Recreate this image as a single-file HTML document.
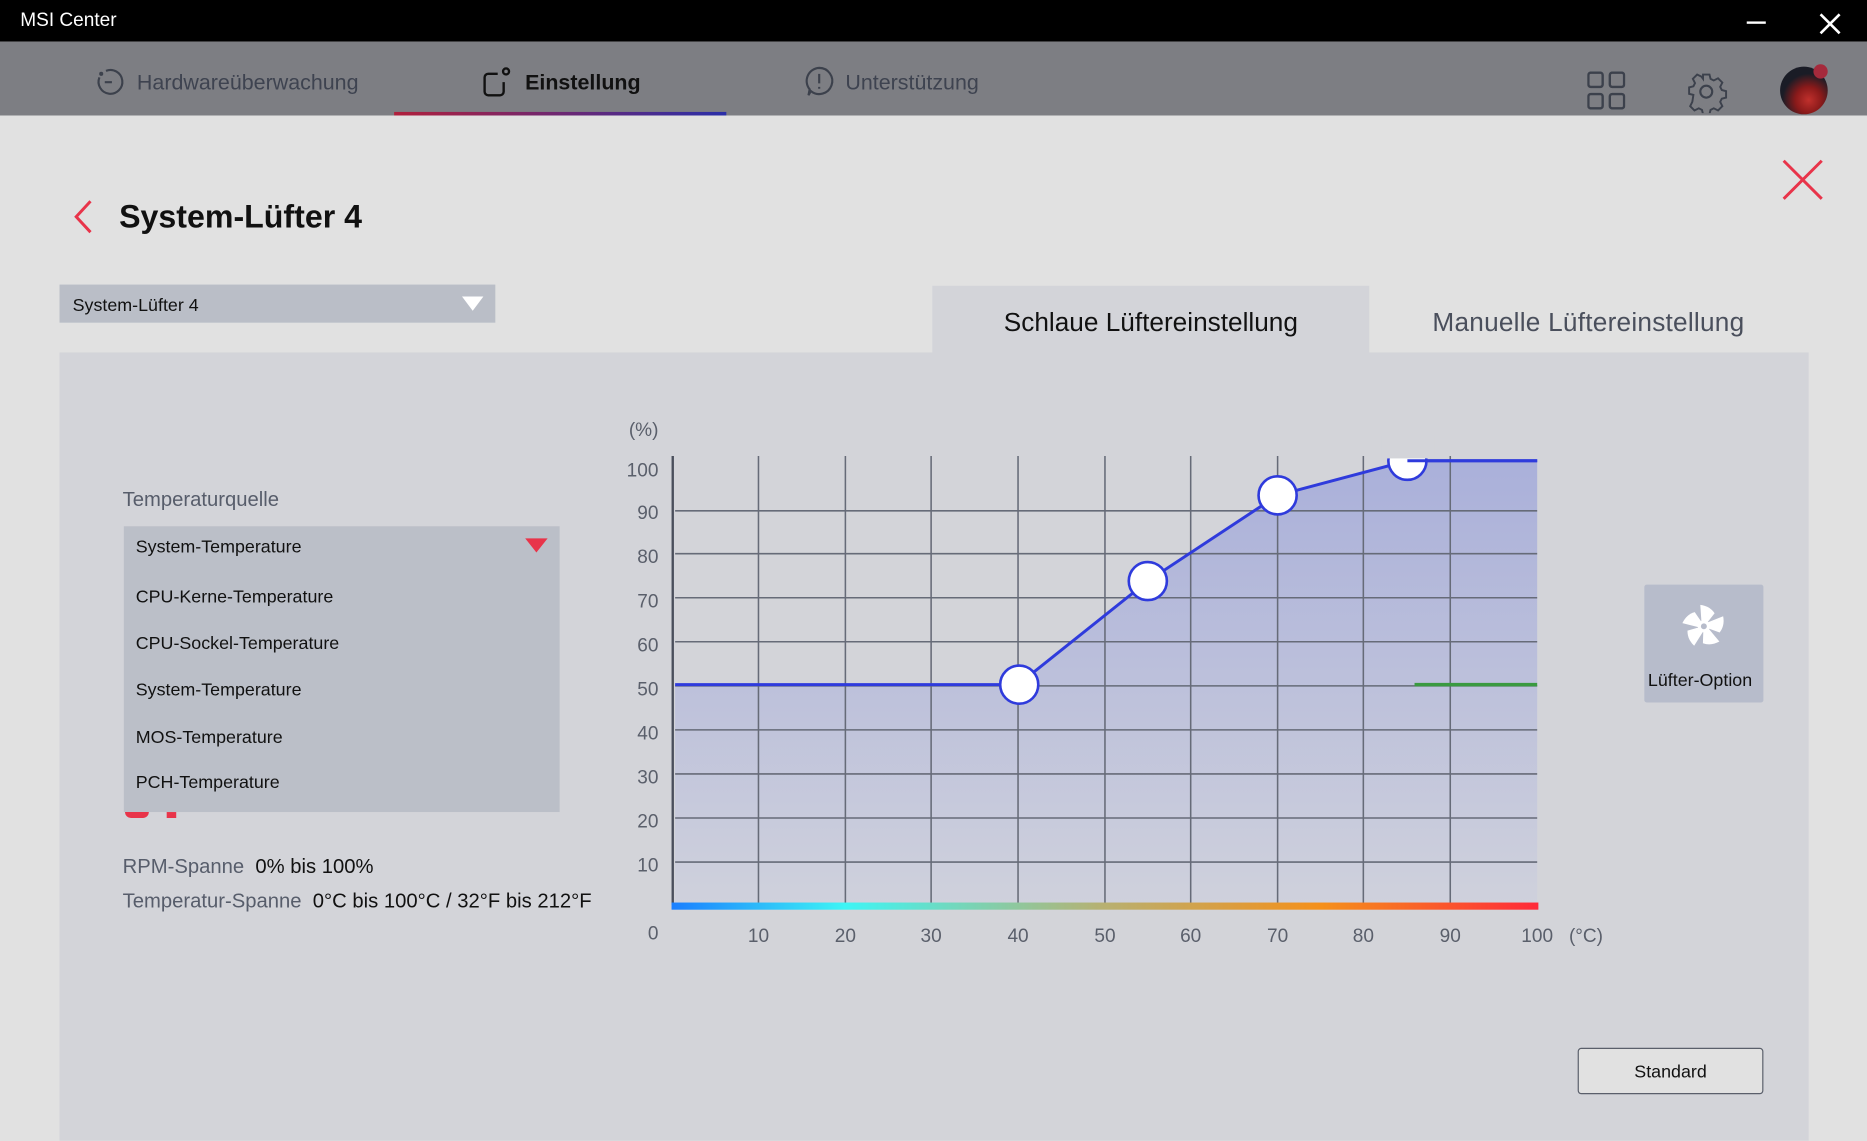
<!DOCTYPE html>
<html><head><meta charset="utf-8"><style>
html,body{margin:0;padding:0;width:1867px;height:1140px;overflow:hidden;background:#e1e1e1;}
#w{position:absolute;left:0;top:0;width:1568px;height:958px;transform:scale(1.19069);transform-origin:0 0;font-family:"Liberation Sans",sans-serif;background:#e1e1e1;}
.a{position:absolute;white-space:nowrap;}
.t{margin-top:2px;}
</style></head><body><div id="w">
<div class="a" style="left:0;top:0;width:1568px;height:35px;background:#000"></div>
<div class="a t" style="left:17px;top:7px;color:#fff;font-size:16px">MSI Center</div>
<div class="a" style="left:1467px;top:18px;width:16px;height:2px;background:#fff"></div>
<svg class="a" style="left:1527px;top:10px" width="20" height="20"><path d="M2 2L18 18M18 2L2 18" stroke="#fff" stroke-width="2.2"/></svg>
<div class="a" style="left:0;top:35px;width:1568px;height:62px;background:#7d7e83"></div>
<svg class="a" style="left:80px;top:56px" width="26" height="26" fill="none" stroke="#3c414c" stroke-width="1.8"><path d="M9 3.5A10 10 0 1 1 3.5 9"/><path d="M8 13h6"/><circle cx="5" cy="6" r="0.8"/></svg>
<div class="a t" style="left:115px;top:57px;color:#3e4350;font-size:18px">Hardwareüberwachung</div>
<svg class="a" style="left:404px;top:55px" width="28" height="28" fill="none" stroke="#111" stroke-width="2"><path d="M14 7H6a3 3 0 0 0-3 3v12a3 3 0 0 0 3 3h10a3 3 0 0 0 3-3V14"/><circle cx="21" cy="5" r="2.5"/></svg>
<div class="a t" style="left:441px;top:57px;color:#111;font-size:18px;font-weight:bold">Einstellung</div>
<div class="a" style="left:331px;top:94px;width:279px;height:3px;background:linear-gradient(90deg,#b0203c,#2a2fa8)"></div>
<svg class="a" style="left:675px;top:55px" width="26" height="28" fill="none" stroke="#3c414c" stroke-width="1.8"><path d="M13 2a11 11 0 1 1-7 19.5L4 25l1-5A11 11 0 0 1 13 2z"/><path d="M13 7v8M13 18v1.5"/></svg>
<div class="a t" style="left:710px;top:57px;color:#3e4350;font-size:18px">Unterstützung</div>
<svg class="a" style="left:1333px;top:60px" width="32" height="32" fill="none" stroke="#3c414c" stroke-width="2"><rect x="1" y="1" width="12" height="12" rx="2"/><rect x="19" y="1" width="12" height="12" rx="2"/><rect x="1" y="19" width="12" height="12" rx="2"/><rect x="19" y="19" width="12" height="12" rx="2"/></svg>
<svg class="a" style="left:1415px;top:59px" width="36" height="36" fill="none" stroke="#3c414c" stroke-width="1.8"><path d="M15 2h6l1 4 3 1.5 4-2 4 4-2 4 1.5 3 4 1v6l-4 1-1.5 3 2 4-4 4-4-2-3 1.5-1 4h-6l-1-4-3-1.5-4 2-4-4 2-4L6 21l-4-1v-6l4-1 1.5-3-2-4 4-4 4 2L15 6z" transform="scale(0.9) translate(2 2)"/><circle cx="18" cy="18" r="5"/></svg>
<div class="a" style="left:1495px;top:56px;width:40px;height:40px;border-radius:50%;background:radial-gradient(circle at 60% 70%,#c0302c 0,#8a1a1a 30%,#1a1c26 60%)"></div>
<div class="a" style="left:1523px;top:54px;width:12px;height:12px;border-radius:50%;background:#a52a3c"></div>
<svg class="a" style="left:1496px;top:133px" width="36" height="36"><path d="M2 2L34 34M34 2L2 34" stroke="#e8344a" stroke-width="2.5"/></svg>
<svg class="a" style="left:60px;top:167px" width="20" height="30"><path d="M16 2L4 15L16 28" stroke="#e8344a" stroke-width="2.5" fill="none"/></svg>
<div class="a t" style="left:100px;top:165px;color:#111;font-size:27px;font-weight:bold">System-Lüfter 4</div>
<div class="a" style="left:50px;top:239px;width:366px;height:32px;background:#babec7"></div>
<div class="a t" style="left:61px;top:246px;color:#111;font-size:15px">System-Lüfter 4</div>
<svg class="a" style="left:388px;top:249px" width="18" height="13"><path d="M0 0H18L9 12z" fill="#fff"/></svg>
<div class="a" style="left:783px;top:240px;width:367px;height:57px;background:#d3d4d9"></div>
<div class="a t" style="left:843px;top:256px;color:#111;font-size:22px">Schlaue Lüftereinstellung</div>
<div class="a t" style="left:1203px;top:256px;color:#4a4f5c;font-size:22px;letter-spacing:0.2px">Manuelle Lüftereinstellung</div>
<div class="a" style="left:50px;top:296px;width:1469px;height:662px;background:#d3d4d9"></div>
<div class="a t" style="left:103px;top:408px;color:#575d6b;font-size:17px">Temperaturquelle</div>
<div class="a" style="left:104px;top:442px;width:366px;height:240px;background:#bbbfc8"></div>
<div class="a t" style="left:114px;top:449px;color:#111;font-size:15px">System-Temperature</div>
<svg class="a" style="left:441px;top:452px" width="20" height="13"><path d="M0 0H19L9.5 12z" fill="#e8344a"/></svg>
<div class="a t" style="left:114px;top:491px;color:#111;font-size:15px">CPU-Kerne-Temperature</div>
<div class="a t" style="left:114px;top:530px;color:#111;font-size:15px">CPU-Sockel-Temperature</div>
<div class="a t" style="left:114px;top:569px;color:#111;font-size:15px">System-Temperature</div>
<div class="a t" style="left:114px;top:609px;color:#111;font-size:15px">MOS-Temperature</div>
<div class="a t" style="left:114px;top:647px;color:#111;font-size:15px">PCH-Temperature</div>
<div class="a" style="left:105px;top:682px;width:20px;height:5px;background:#e8344a;border-radius:0 0 8px 8px"></div>
<div class="a" style="left:140px;top:682px;width:8px;height:5px;background:#e8344a"></div>
<div class="a t" style="left:103px;top:716px;font-size:17px;color:#575d6b">RPM-Spanne <span style="color:#111">&nbsp;0% bis 100%</span></div>
<div class="a t" style="left:103px;top:745px;font-size:17px;color:#575d6b">Temperatur-Spanne <span style="color:#111">&nbsp;0°C bis 100°C / 32°F bis 212°F</span></div>
<svg class="a" style="left:500px;top:340px" width="880" height="470" font-family="Liberation Sans, sans-serif" font-size="16" fill="#5a5f6b">
<defs><linearGradient id="f" x1="0" y1="0" x2="0" y2="1"><stop offset="0" stop-color="#aab0da"/><stop offset="1" stop-color="#cfd1dc"/></linearGradient>
<linearGradient id="r" x1="0" x2="1"><stop offset="0" stop-color="#1a7fff"/><stop offset="0.2" stop-color="#3ef5f5"/><stop offset="0.5" stop-color="#b8b070"/><stop offset="0.75" stop-color="#f5901a"/><stop offset="1" stop-color="#ff2a3a"/></linearGradient></defs>
<g transform="translate(-500 -340)">
<path d="M567 575H855L964 488L1073 416L1182 387H1291V760H567z" fill="url(#f)"/>
<g stroke="#666b78" stroke-width="1.3">
<path d="M637 383V760M710 383V760M782 383V760M855 383V760M928 383V760M1000 383V760M1073 383V760M1145 383V760M1218 383V760"/>
<path d="M567 429H1291M567 465H1291M567 502H1291M567 539H1291M567 576H1291M567 613H1291M567 650H1291M567 687H1291M567 724H1291"/>
</g>
<path d="M565 383V760" stroke="#4a4f5c" stroke-width="2"/>
<rect x="564" y="758" width="728" height="6" fill="url(#r)"/>
<path d="M1188 575H1291" stroke="#3a9a40" stroke-width="3"/>
<path d="M567 575H855L964 488L1073 416L1182 387H1291" stroke="#2f3bdc" stroke-width="2.5" fill="none"/>
<g fill="#fff" stroke="#2f3bdc" stroke-width="2.2"><circle cx="856" cy="575" r="16"/><circle cx="964" cy="488" r="16"/><circle cx="1073" cy="416" r="16"/><circle cx="1182" cy="387" r="16"/></g>
<rect x="1160" y="366" width="45" height="19" fill="#d3d4d9"/>
<path d="M1182 387H1291" stroke="#2f3bdc" stroke-width="2.5"/>
<g text-anchor="end"><text x="553" y="366">(%)</text><text x="553" y="400">100</text><text x="553" y="436">90</text><text x="553" y="473">80</text><text x="553" y="510">70</text><text x="553" y="547">60</text><text x="553" y="584">50</text><text x="553" y="621">40</text><text x="553" y="658">30</text><text x="553" y="695">20</text><text x="553" y="732">10</text><text x="553" y="789">0</text></g>
<g text-anchor="middle"><text x="637" y="791">10</text><text x="710" y="791">20</text><text x="782" y="791">30</text><text x="855" y="791">40</text><text x="928" y="791">50</text><text x="1000" y="791">60</text><text x="1073" y="791">70</text><text x="1145" y="791">80</text><text x="1218" y="791">90</text><text x="1291" y="791">100</text><text x="1332" y="791">(°C)</text></g>
</g></svg>
<div class="a" style="left:1381px;top:491px;width:100px;height:99px;background:#b7bccb;border-radius:2px"></div>
<svg class="a" style="left:1409px;top:503px" width="44" height="46" fill="#fff"><g transform="translate(22 23)">
<path d="M-2-3L-3-18Q5-17 9-11L2-2z"/>
<path d="M-2-3L-3-18Q5-17 9-11L2-2z" transform="rotate(72)"/>
<path d="M-2-3L-3-18Q5-17 9-11L2-2z" transform="rotate(144)"/>
<path d="M-2-3L-3-18Q5-17 9-11L2-2z" transform="rotate(216)"/>
<path d="M-2-3L-3-18Q5-17 9-11L2-2z" transform="rotate(288)"/>
<circle r="5" fill="#fff"/><circle r="2.5" fill="#b7bccb"/></g></svg>
<div class="a t" style="left:1384px;top:561px;color:#111;font-size:15px">Lüfter-Option</div>
<div class="a" style="left:1325px;top:880px;width:156px;height:39px;border:1px solid #5a5f6b;border-radius:3px;background:#e1e1e1;box-sizing:border-box;text-align:center;line-height:39px;font-size:15px;color:#111">Standard</div>
</div></body></html>
